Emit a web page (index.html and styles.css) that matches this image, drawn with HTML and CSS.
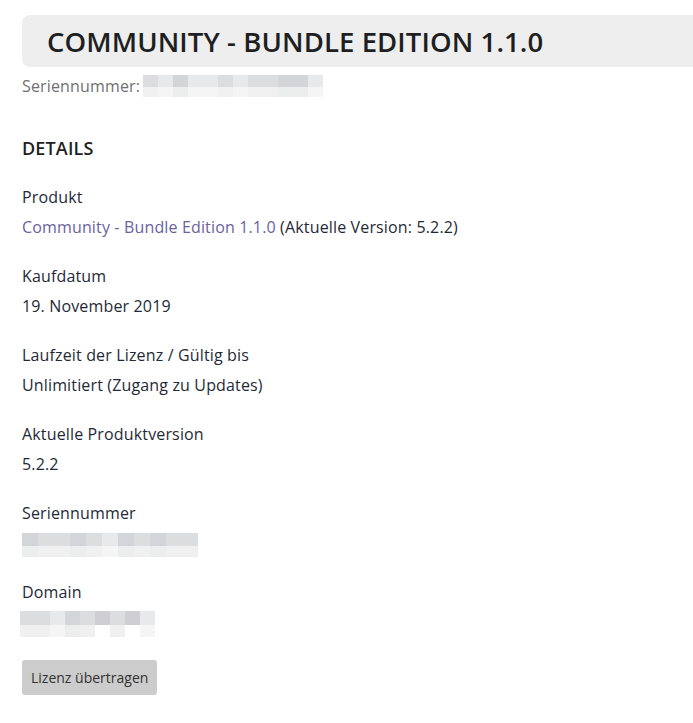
FILE: index.html
```html
<!DOCTYPE html>
<html lang="de">
<head>
    <meta charset="UTF-8">
    <title>Community - Bundle Edition 1.1.0</title>
    <link rel="stylesheet" href="styles.css">
</head>
<body>
    <div class="page">
        <div class="title-box">
            <h1>Community - Bundle Edition 1.1.0</h1>
        </div>
        <div class="serial-line">
            Seriennummer:
            <span class="blur blur-top">
                <span class="s2"></span><span class="s1"></span><span class="s3"></span><span class="s1"></span><span class="s1"></span><span class="s2"></span><span class="s1"></span><span class="s2"></span><span class="s2"></span><span class="s3"></span><span class="s3"></span><span class="s1"></span>
            </span>
        </div>

        <h2>Details</h2>

        <div class="field">
            <div class="label">Produkt</div>
            <div class="value"><a href="#">Community - Bundle Edition 1.1.0</a> (Aktuelle Version: 5.2.2)</div>
        </div>
        <div class="field">
            <div class="label">Kaufdatum</div>
            <div class="value">19. November 2019</div>
        </div>
        <div class="field">
            <div class="label">Laufzeit der Lizenz / Gültig bis</div>
            <div class="value">Unlimitiert (Zugang zu Updates)</div>
        </div>
        <div class="field">
            <div class="label">Aktuelle Produktversion</div>
            <div class="value">5.2.2</div>
        </div>
        <div class="field">
            <div class="label">Seriennummer</div>
            <div class="value">
                <span class="blur blur-serial">
                    <span class="s3"></span><span class="s2"></span><span class="s2"></span><span class="s3"></span><span class="s2"></span><span class="s1"></span><span class="s3"></span><span class="s2"></span><span class="s3"></span><span class="s2"></span><span class="s2"></span>
                </span>
            </div>
        </div>
        <div class="field">
            <div class="label">Domain</div>
            <div class="value">
                <span class="blur blur-domain">
                    <span class="s2"></span><span class="s2"></span><span class="s1"></span><span class="s3"></span><span class="s2"></span><span class="s4"></span><span class="s2"></span><span class="s4"></span><span class="s1"></span>
                </span>
            </div>
        </div>

        <button class="transfer-btn">Lizenz übertragen</button>
    </div>
</body>
</html>
```

FILE: styles.css
```css
body {
    margin: 0;
    font-family: "Open Sans", sans-serif;
    font-size: 16px;
    letter-spacing: 0.15px;
    color: #1f2a36;
    background-color: #fff;
}
.page {
    padding: 15px 0 0 22px;
}
.title-box {
    background-color: #eeeeee;
    border-radius: 8px 0 0 8px;
    height: 52px;
    display: flex;
    align-items: center;
    padding-left: 25px;
}
h1 {
    margin: 0;
    font-size: 27.5px;
    font-weight: 600;
    letter-spacing: 0.1px;
    text-transform: uppercase;
    color: #1d1f22;
}
.serial-line {
    display: flex;
    align-items: center;
    height: 38px;
    color: #707070;
}
h2 {
    margin: 31px 0 22px;
    font-size: 18px;
    font-weight: 600;
    text-transform: uppercase;
    color: #1d1f22;
}
.field {
    line-height: 30px;
    margin-bottom: 19px;
}
.value a {
    color: #6a62a0;
    text-decoration: none;
}
.blur {
    display: inline-grid;
    grid-auto-flow: column;
    vertical-align: middle;
}
.blur span {
    display: block;
    width: 15px;
}
.blur-top {
    margin-left: 3px;
}
.blur-top span {
    height: 22px;
}
.blur-serial span {
    width: 16px;
    height: 24px;
}
.blur-domain span {
    height: 26px;
}
.blur .s1 {
    background: linear-gradient(#e8e9eb 55%, #f5f5f6 55%);
}
.blur .s2 {
    background: linear-gradient(#dcdddf 55%, #f0f0f1 55%);
}
.blur .s3 {
    background: linear-gradient(#d3d5d9 55%, #eceded 55%);
}
.blur .s4 {
    background: linear-gradient(#cfced2 55%, #ffffff 55%);
}
.blur-domain {
    margin-left: -2px;
}
.transfer-btn {
    margin-top: 4px;
    padding: 8px 9px;
    font-family: "Open Sans", sans-serif;
    font-size: 14px;
    color: #333;
    background-color: #cccccc;
    border: none;
    border-radius: 3px;
}
```
